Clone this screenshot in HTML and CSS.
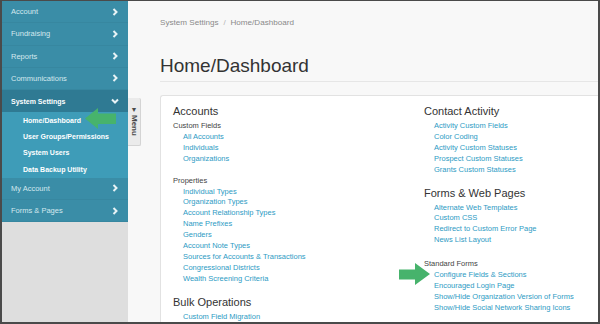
FILE: index.html
```html
<!DOCTYPE html>
<html lang="en">
<head>
<meta charset="utf-8">
<title>Home/Dashboard</title>
<link rel="stylesheet" href="styles.css">
</head>
<body>
<div class="frame">
  <nav class="sidebar">
    <a class="nav-item" href="#">Account<svg class="chev" viewBox="0 0 6 8"><polyline points="1.5,1 4.5,4 1.5,7"/></svg></a>
    <a class="nav-item" href="#">Fundraising<svg class="chev" viewBox="0 0 6 8"><polyline points="1.5,1 4.5,4 1.5,7"/></svg></a>
    <a class="nav-item" href="#">Reports<svg class="chev" viewBox="0 0 6 8"><polyline points="1.5,1 4.5,4 1.5,7"/></svg></a>
    <a class="nav-item" href="#">Communications<svg class="chev" viewBox="0 0 6 8"><polyline points="1.5,1 4.5,4 1.5,7"/></svg></a>
    <a class="nav-item open" href="#">System Settings<svg class="chev-down" viewBox="0 0 8 6"><polyline points="1,1.5 4,4.5 7,1.5"/></svg></a>
    <div class="submenu">
      <a class="sub-item" href="#">Home/Dashboard</a>
      <a class="sub-item" href="#">User Groups/Permissions</a>
      <a class="sub-item" href="#">System Users</a>
      <a class="sub-item" href="#">Data Backup Utility</a>
    </div>
    <a class="nav-item" href="#">My Account<svg class="chev" viewBox="0 0 6 8"><polyline points="1.5,1 4.5,4 1.5,7"/></svg></a>
    <a class="nav-item" href="#">Forms &amp; Pages<svg class="chev" viewBox="0 0 6 8"><polyline points="1.5,1 4.5,4 1.5,7"/></svg></a>
  </nav>
  <main class="main">
    <div class="menu-tab"><span class="tab-tri">&#9660;</span><span class="tab-text">Menu</span></div>
    <div class="crumbs"><span>System Settings</span><span class="sep">/</span><span>Home/Dashboard</span></div>
    <h1 class="title">Home/Dashboard</h1>
    <div class="card">
      <div class="col col-left">
        <section class="section">
          <h2 class="sec-title">Accounts</h2>
          <div class="group">
            <div class="sub">Custom Fields</div>
            <ul class="links">
              <li><a href="#">All Accounts</a></li>
              <li><a href="#">Individuals</a></li>
              <li><a href="#">Organizations</a></li>
            </ul>
          </div>
          <div class="group">
            <div class="sub">Properties</div>
            <ul class="links">
              <li><a href="#">Individual Types</a></li>
              <li><a href="#">Organization Types</a></li>
              <li><a href="#">Account Relationship Types</a></li>
              <li><a href="#">Name Prefixes</a></li>
              <li><a href="#">Genders</a></li>
              <li><a href="#">Account Note Types</a></li>
              <li><a href="#">Sources for Accounts &amp; Transactions</a></li>
              <li><a href="#">Congressional Districts</a></li>
              <li><a href="#">Wealth Screening Criteria</a></li>
            </ul>
          </div>
        </section>
        <section class="section">
          <h2 class="sec-title">Bulk Operations</h2>
          <div class="group">
            <ul class="links">
              <li><a href="#">Custom Field Migration</a></li>
            </ul>
          </div>
        </section>
      </div>
      <div class="col col-right">
        <section class="section">
          <h2 class="sec-title">Contact Activity</h2>
          <div class="group">
            <ul class="links">
              <li><a href="#">Activity Custom Fields</a></li>
              <li><a href="#">Color Coding</a></li>
              <li><a href="#">Activity Custom Statuses</a></li>
              <li><a href="#">Prospect Custom Statuses</a></li>
              <li><a href="#">Grants Custom Statuses</a></li>
            </ul>
          </div>
        </section>
        <section class="section">
          <h2 class="sec-title">Forms &amp; Web Pages</h2>
          <div class="group">
            <ul class="links">
              <li><a href="#">Alternate Web Templates</a></li>
              <li><a href="#">Custom CSS</a></li>
              <li><a href="#">Redirect to Custom Error Page</a></li>
              <li><a href="#">News List Layout</a></li>
            </ul>
          </div>
          <div class="group">
            <div class="sub">Standard Forms</div>
            <ul class="links">
              <li><a href="#">Configure Fields &amp; Sections</a></li>
              <li><a href="#">Encouraged Login Page</a></li>
              <li><a href="#">Show/Hide Organization Version of Forms</a></li>
              <li><a href="#">Show/Hide Social Network Sharing Icons</a></li>
            </ul>
          </div>
        </section>
      </div>
    </div>
  </main>
  <svg class="arrow arrow-left" viewBox="0 0 31 21"><polygon points="0,10.5 13,0 13,5.5 31,5.5 31,16 13,16 13,21"/></svg>
  <svg class="arrow arrow-right" viewBox="0 0 31 22"><polygon points="0,6.5 16,6.5 16,0 31,11 16,22 16,16.5 0,16.5"/></svg>
</div>
</body>
</html>
```
FILE: styles.css
```css
html, body {
  margin: 0;
  padding: 0;
  background: #4a4a4a;
}

.frame {
  position: relative;
  width: 600px;
  height: 324px;
  box-sizing: border-box;
  border: 2px solid #4a4a4a;
  border-top-width: 1px;
  display: flex;
  overflow: hidden;
  font-family: "Liberation Sans", Arial, Helvetica, sans-serif;
  background: #f8f8f8;
}

/* Sidebar */
.sidebar {
  width: 126px;
  flex: none;
  display: flex;
  flex-direction: column;
  background: #dedede;
}

.nav-item {
  height: 22.25px;
  box-sizing: border-box;
  display: flex;
  align-items: center;
  justify-content: space-between;
  padding: 0 10px 0 9px;
  background: #3a8da7;
  color: #d4e8ee;
  font-size: 7.5px;
  text-decoration: none;
  border-bottom: 1px solid rgba(0, 0, 0, 0.04);
}

.nav-item.open {
  background: #2f7a93;
  color: #fff;
  font-weight: bold;
  font-size: 7px;
  border-bottom: none;
}

.chev {
  width: 6px;
  height: 8px;
}

.chev-down {
  width: 8px;
  height: 6px;
  margin-right: -1px;
}

.chev polyline,
.chev-down polyline {
  fill: none;
  stroke: #e8f3f6;
  stroke-width: 2;
}

.submenu {
  background: #3e9cb8;
  padding: 0.5px 0;
  display: flex;
  flex-direction: column;
}

.sub-item {
  height: 16.1px;
  display: flex;
  align-items: center;
  padding-left: 21px;
  color: #fff;
  font-weight: bold;
  font-size: 7px;
  text-decoration: none;
}

/* Main */
.main {
  flex: 1;
  position: relative;
  min-width: 0;
  padding: 17px 0 0 32px;
  background: #f8f8f8;
  overflow: hidden;
}

.menu-tab {
  position: absolute;
  left: 0;
  top: 97px;
  width: 13px;
  height: 48px;
  box-sizing: border-box;
  background: #ebebeb;
  border-right: 1px solid #d4d4d4;
  border-bottom: 1px solid #d4d4d4;
  border-radius: 0 2px 2px 0;
  display: flex;
  flex-direction: column;
  align-items: center;
  padding-top: 8px;
  color: #4a4a4a;
}

.tab-tri {
  font-size: 7px;
  line-height: 7px;
}

.tab-text {
  writing-mode: vertical-rl;
  font-size: 8px;
  font-weight: bold;
  margin-top: 2px;
  line-height: 8px;
}

.crumbs {
  display: flex;
  font-size: 8.1px;
  line-height: 10px;
  color: #8a8a8a;
}

.sep {
  padding: 0 4.9px;
  color: #b5b5b5;
}

.title {
  margin: 27.6px 0 0;
  padding-bottom: 6.4px;
  border-bottom: 1px solid #e6e6e6;
  font-size: 19px;
  line-height: 19px;
  font-weight: normal;
  color: #333;
}

.card {
  margin-top: 13px;
  height: 400px;
  background: #fff;
  border: 1px solid #e2e2e2;
  border-right: none;
  border-radius: 3px 0 0 0;
  padding: 6px 0 0 12px;
  display: grid;
  grid-template-columns: 251px 1fr;
  align-content: start;
}

.section + .section {
  margin-top: 8px;
}

.sec-title {
  margin: 0 0 1px;
  font-size: 11px;
  line-height: 18px;
  font-weight: normal;
  color: #333;
}

.col-left .group + .group {
  margin-top: 11px;
}

.col-right .group + .group {
  margin-top: 13px;
}

.sub {
  font-size: 7.5px;
  line-height: 10.9px;
  color: #444;
}

.links {
  list-style: none;
  margin: 0;
  padding: 0 0 0 10px;
}

.links a {
  display: block;
  font-size: 7.5px;
  line-height: 10.9px;
  color: #2d9bc4;
  text-decoration: none;
}

/* Annotation arrows */
.arrow {
  position: absolute;
  fill: #47b36c;
}

.arrow-left {
  left: 83px;
  top: 107px;
  width: 31px;
  height: 21px;
}

.arrow-right {
  left: 397px;
  top: 262px;
  width: 31px;
  height: 22px;
}
```
